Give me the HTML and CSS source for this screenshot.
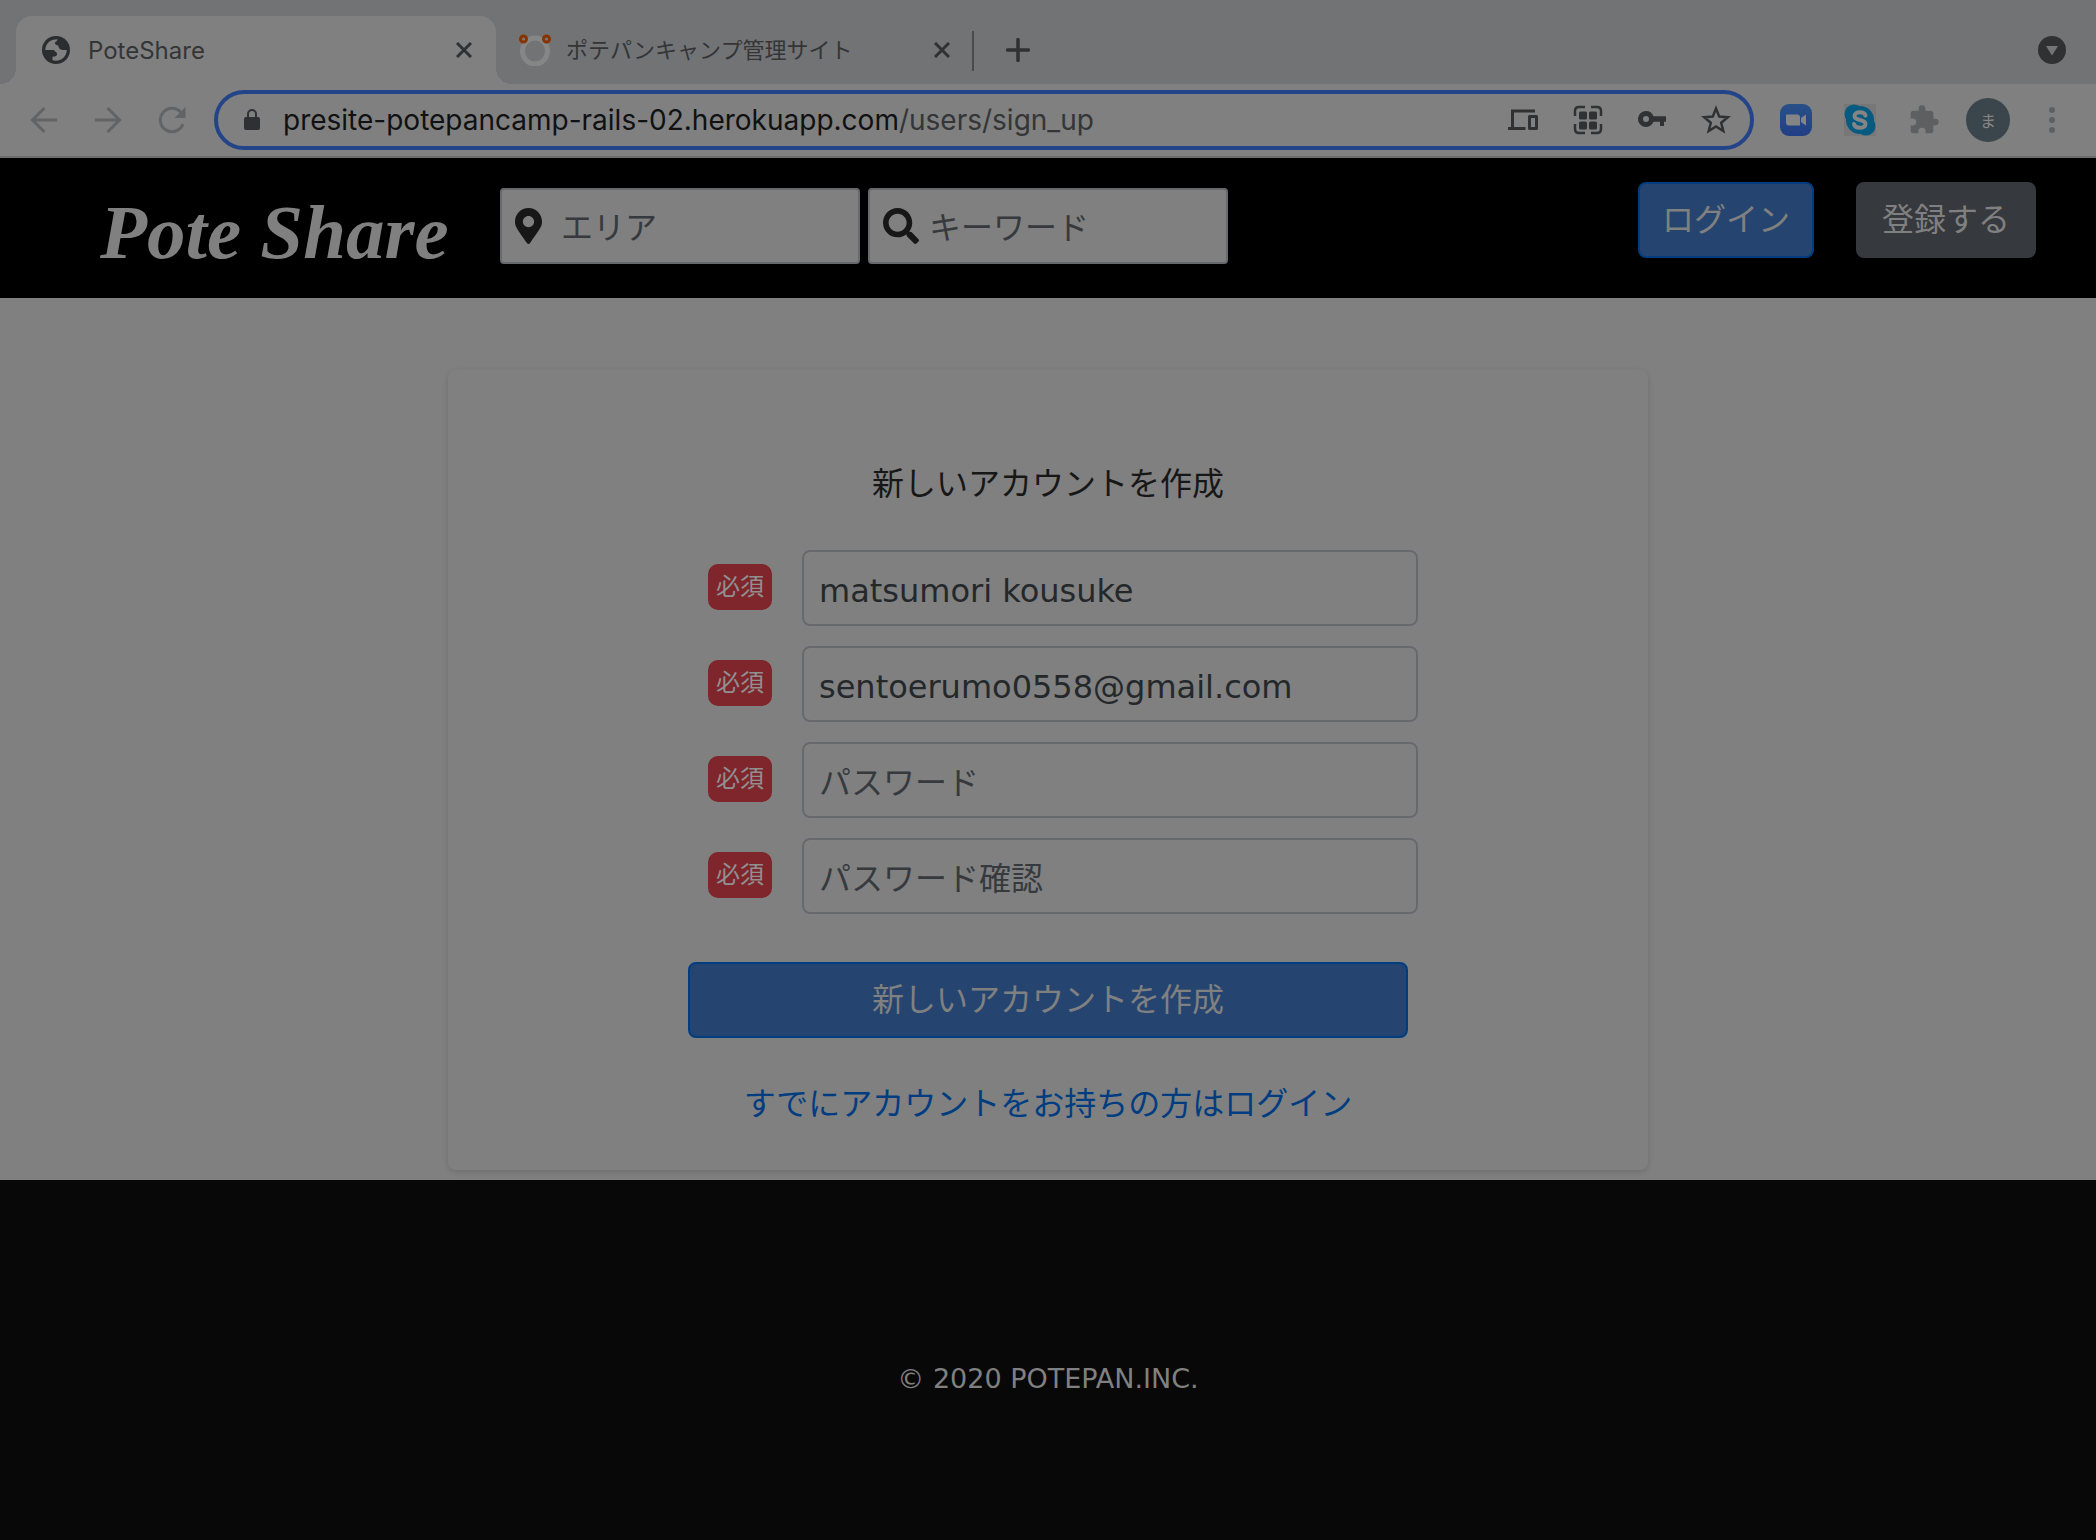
FILE: index.html
```html
<!DOCTYPE html>
<html lang="ja">
<head>
<meta charset="utf-8">
<title>PoteShare</title>
<link rel="stylesheet" href="styles.css">
</head>
<body>
<div class="browser">
  <div class="tabstrip">
    <div class="tab tab-active">
      <svg class="favicon" viewBox="0 0 28 28" width="28" height="28"><circle cx="14" cy="14" r="14" fill="#2b2d30"/><path d="M3.300 14C3.300 8 8 3.300 15.500 3.300C15.500 5.500 12.800 5.500 13 7.500C13.300 9.300 16.200 8.500 16.600 10.800C17 13.300 19 14 21 14H24.700C24.700 20 20 24.700 14 24.700L10.500 24.200V20.800C13.800 20.800 15.500 19.500 15 17.500C14.500 15.800 13 16 12 14Z" fill="#808080"/></svg>
      <span class="tab-title">PoteShare</span>
      <button class="icon-button" aria-label="タブを閉じる"><svg viewBox="0 0 16 16" width="16" height="16"><path d="M1 1L15 15M15 1L1 15" stroke="#2f3133" stroke-width="3"/></svg></button>
    </div>
    <div class="tab tab-idle">
      <svg class="favicon" viewBox="0 0 32 32" width="32" height="32"><ellipse cx="16" cy="17" rx="12.500" ry="13" fill="none" stroke="#858686" stroke-width="5"/><circle cx="4.500" cy="5" r="3" fill="#807a76" stroke="#853402" stroke-width="3"/><circle cx="27.500" cy="5" r="3" fill="#807a76" stroke="#853402" stroke-width="3"/></svg>
      <span class="tab-title tab-title-ja">ポテパンキャンプ管理サイト</span>
      <button class="icon-button" aria-label="タブを閉じる"><svg viewBox="0 0 16 16" width="16" height="16"><path d="M1 1L15 15M15 1L1 15" stroke="#2f3133" stroke-width="3"/></svg></button>
    </div>
    <span class="tab-divider"></span>
    <button class="icon-button new-tab" aria-label="新しいタブ"><svg viewBox="0 0 24 24" width="24" height="24"><path d="M12 1.500V22.500M1.500 12H22.500" stroke="#2f3133" stroke-width="3.500" stroke-linecap="round"/></svg></button>
    <button class="icon-button tab-search" aria-label="タブを検索"><svg viewBox="0 0 28 28" width="28" height="28"><circle cx="14" cy="14" r="14" fill="#303133"/><path d="M8 10H20L14 19.500Z" fill="#747577"/></svg></button>
  </div>
  <div class="toolbar">
    <div class="nav-buttons">
      <button class="icon-button" aria-label="戻る"><svg viewBox="0 0 28 28" width="28" height="28"><path d="M27 14H3M14.500 2L2.500 14L14.500 26" fill="none" stroke="#616365" stroke-width="3"/></svg></button>
      <button class="icon-button" aria-label="進む"><svg viewBox="0 0 28 28" width="28" height="28"><path d="M1 14H25M13.500 2L25.500 14L13.500 26" fill="none" stroke="#616365" stroke-width="3"/></svg></button>
      <button class="icon-button" aria-label="再読み込み"><svg viewBox="0 0 28 28" width="28" height="28"><path d="M25 18A11.700 11.700 0 1 1 23 6.500" fill="none" stroke="#616365" stroke-width="3"/><path d="M27.500 1V12H16.500Z" fill="#616365"/></svg></button>
    </div>
    <div class="omnibox">
      <svg class="lock" viewBox="0 0 16 22" width="16" height="22"><rect y="8" width="16" height="13" rx="2" fill="#2e3033"/><path d="M4 9V5a4 4 0 0 1 8 0V9" fill="none" stroke="#2e3033" stroke-width="2"/></svg>
      <div class="url"><span class="url-host">presite-potepancamp-rails-02.herokuapp.com</span>/users/sign_up</div>
      <div class="page-actions">
        <svg viewBox="0 0 32 32" width="32" height="32"><path d="M4.500 24V7H27M0 24.500H17.500" fill="none" stroke="#303133" stroke-width="3"/><path d="M21.500 12.500H28.500V24.500H21.500Z" fill="none" stroke="#303133" stroke-width="3" stroke-linejoin="round"/></svg>
        <svg viewBox="0 0 32 32" width="32" height="32"><path d="M3 12V7Q3 3 7 3H13M19 3H25Q29 3 29 7V12M29 20V25Q29 29 25 29H19M13 29H7Q3 29 3 25V20" fill="none" stroke="#303133" stroke-width="2.500"/><g fill="#303133"><rect x="7" y="7.500" width="8" height="8" rx="1.500"/><rect x="17" y="7.500" width="8" height="8" rx="1.500"/><rect x="7" y="17.500" width="8" height="8" rx="1.500"/><rect x="17" y="17.500" width="8" height="8" rx="1.500"/></g></svg>
        <svg viewBox="0 0 32 32" width="32" height="32"><path fill-rule="evenodd" d="M10 7a8 8 0 1 0 7.500 10.700H24V22H28V17.700H30V12.300H17.500A8 8 0 0 0 10 7ZM10 12a3 3 0 1 1 0 6a3 3 0 0 1 0-6Z" fill="#303133"/></svg>
        <svg viewBox="0 0 32 32" width="32" height="32"><path d="M16 4.500L19.200 12.500L27.800 13.200L21.200 18.700L23.300 27L16 22.500L8.700 27L10.800 18.700L4.200 13.200L12.800 12.500Z" fill="none" stroke="#303133" stroke-width="2.500"/></svg>
      </div>
    </div>
    <div class="extensions">
      <svg viewBox="0 0 32 32" width="32" height="32"><defs><linearGradient id="zoom-blue" x1="0" y1="0" x2="0" y2="1"><stop offset="0" stop-color="#285086"/><stop offset="1" stop-color="#213f86"/></linearGradient></defs><rect width="32" height="32" rx="9" fill="url(#zoom-blue)"/><path d="M6 10.500H17Q20 10.500 20 13.500V21.500H9Q6 21.500 6 18.500ZM21 14L26 10.500V21.500L21 18Z" fill="#858585"/></svg>
      <svg viewBox="0 0 32 32" width="32" height="32"><rect width="32" height="32" fill="#777"/><circle cx="10" cy="10" r="9.500" fill="#075a80"/><circle cx="22" cy="22" r="9.500" fill="#075a80"/><circle cx="16" cy="16" r="14" fill="#075a80"/><path d="M21.500 11.500C20.500 7 10.500 7 10.500 12C10.500 17.500 21.500 14.500 21.500 20C21.500 25 11 25 10 20" fill="none" stroke="#858585" stroke-width="4" stroke-linecap="round"/></svg>
      <svg viewBox="0 0 24 24" width="32" height="32"><path fill="#5d5f61" d="M20.500 11H19V7c0-1.100-.9-2-2-2h-4V3.500a2.500 2.500 0 0 0-5 0V5H4c-1.100 0-2 .9-2 2v3.800h1.500a2.700 2.700 0 0 1 0 5.400H2V20c0 1.100.9 2 2 2h3.800v-1.500a2.700 2.700 0 0 1 5.400 0V22H17c1.100 0 2-.9 2-2v-4h1.500a2.500 2.500 0 0 0 0-5z"/></svg>
      <button class="avatar">ま</button>
      <button class="icon-button" aria-label="メニュー"><svg viewBox="0 0 32 32" width="32" height="32"><g fill="#5d5f61"><circle cx="16" cy="6" r="3"/><circle cx="16" cy="16" r="3"/><circle cx="16" cy="26" r="3"/></g></svg></button>
    </div>
  </div>
</div>
<header class="site-header">
  <a class="logo" href="#">Pote Share</a>
  <form class="search">
    <label class="search-field"><svg viewBox="0 0 384 512" width="27" height="36"><path fill="#171717" d="M172.300 501.700C27 291 0 269.400 0 192 0 86 86 0 192 0s192 86 192 192c0 77.400-27 99-172.300 309.700-9.500 13.800-29.900 13.800-39.400 0zM192 272c44.200 0 80-35.800 80-80s-35.800-80-80-80-80 35.800-80 80 35.800 80 80 80z"/></svg><input class="area-input" type="text" placeholder="エリア" aria-label="エリア"></label>
    <label class="search-field"><svg viewBox="0 0 512 512" width="36" height="36"><path fill="#171717" d="M505 442.700L405.300 343c-4.500-4.500-10.600-7-17-7H372c27.600-35.300 44-79.700 44-128C416 93.100 322.900 0 208 0S0 93.100 0 208s93.100 208 208 208c48.300 0 92.700-16.400 128-44v16.300c0 6.400 2.500 12.500 7 17l99.700 99.700c9.400 9.400 24.600 9.400 33.900 0l28.300-28.300c9.400-9.400 9.400-24.600.1-34zM208 336c-70.700 0-128-57.200-128-128 0-70.700 57.200-128 128-128 70.700 0 128 57.200 128 128 0 70.700-57.200 128-128 128z"/></svg><input type="text" placeholder="キーワード" aria-label="キーワード"></label>
  </form>
  <nav class="account">
    <button class="btn btn-primary btn-login">ログイン</button>
    <button class="btn btn-secondary">登録する</button>
  </nav>
</header>
<main class="content">
  <section class="card">
    <h1 class="card-title">新しいアカウントを作成</h1>
    <form class="signup">
      <div class="field"><label class="badge" for="name">必須</label><input class="field-input" id="name" type="text" value="matsumori kousuke"></div>
      <div class="field"><label class="badge" for="email">必須</label><input class="field-input" id="email" type="email" value="sentoerumo0558@gmail.com"></div>
      <div class="field"><label class="badge" for="password">必須</label><input class="field-input" id="password" type="password" placeholder="パスワード"></div>
      <div class="field"><label class="badge" for="confirm">必須</label><input class="field-input" id="confirm" type="password" placeholder="パスワード確認"></div>
      <button class="btn btn-primary btn-submit">新しいアカウントを作成</button>
    </form>
    <a class="login-link" href="#">すでにアカウントをお持ちの方はログイン</a>
  </section>
</main>
<footer class="site-footer">© 2020 POTEPAN.INC.</footer>
</body>
</html>
```
FILE: styles.css
```css
* { box-sizing: border-box; }

body {
  margin: 0;
  min-height: 100vh;
  display: flex;
  flex-direction: column;
  background: #808080;
  font-family: "DejaVu Sans", "Noto Sans CJK JP", sans-serif;
  font-size: 32px;
}

button, input { font: inherit; }
svg { display: block; flex: none; }

.icon-button {
  display: grid;
  place-items: center;
  flex: none;
  padding: 0;
  border: 0;
  background: none;
}

/* Browser chrome */
.browser { font-family: Inter, "Noto Sans CJK JP", sans-serif; }

.tabstrip {
  height: 84px;
  padding: 16px 30px 0 16px;
  display: flex;
  background: #727375;
}

.tab {
  width: 480px;
  height: 68px;
  display: flex;
  align-items: center;
}

.tab-idle { padding: 0 26px 0 23px; }

.tab-active {
  position: relative;
  padding: 0 24px 0 26px;
  border-radius: 16px 16px 0 0;
  background: #808080;
}

.tab-active::before,
.tab-active::after {
  content: "";
  position: absolute;
  bottom: 0;
  width: 16px;
  height: 16px;
}

.tab-active::before {
  left: -16px;
  background: radial-gradient(circle at 0 0, transparent 16px, #808080 16px);
}

.tab-active::after {
  right: -16px;
  background: radial-gradient(circle at 100% 0, transparent 16px, #808080 16px);
}

.tab-title {
  flex: 1;
  margin-left: 18px;
  font-size: 24px;
  color: #333537;
  white-space: nowrap;
}

.tab-title-ja {
  margin-left: 15px;
  padding-bottom: 4px;
  font-size: 22px;
}

.tab-divider {
  width: 2px;
  height: 40px;
  margin: 15px 0 0 -4px;
  background: #4a4b4d;
}

.new-tab { margin-left: 32px; }
.tab-search { margin-left: auto; }

.toolbar {
  height: 74px;
  padding: 0 28px 0 30px;
  display: flex;
  align-items: center;
  border-bottom: 2px solid #6c6c6c;
}

.nav-buttons {
  display: flex;
  gap: 36px;
  margin-right: 28px;
}

.omnibox {
  flex: 1;
  height: 60px;
  padding: 0 18px 0 26px;
  display: flex;
  align-items: center;
  border: 4px solid #234488;
  border-radius: 30px;
}

.url {
  flex: 1;
  margin-left: 23px;
  font-size: 28px;
  color: #343537;
  white-space: nowrap;
}

.url-host { color: #101112; }

.page-actions, .extensions {
  display: flex;
  align-items: center;
  gap: 32px;
}

.extensions { margin-left: 26px; }
.extensions .icon-button { margin-left: -6px; }

.avatar {
  width: 44px;
  height: 44px;
  margin-left: -6px;
  padding: 0;
  border: 0;
  border-radius: 50%;
  background: #3a464c;
  color: #858585;
  font-size: 16px;
}

/* Site header */
.site-header {
  height: 140px;
  padding: 0 60px 0 100px;
  display: flex;
  align-items: flex-start;
  background: #000;
}

.logo {
  width: 400px;
  padding-top: 30px;
  font: italic bold 77px/88px "Liberation Serif", serif;
  color: #808080;
  text-decoration: none;
  white-space: nowrap;
}

.search {
  display: flex;
  gap: 8px;
  padding-top: 30px;
}

.search-field {
  width: 360px;
  height: 76px;
  padding: 0 14px 0 13px;
  display: flex;
  align-items: center;
  gap: 10px;
  border: 2px solid #676a6d;
  border-radius: 4px;
  background: #808080;
}

.search-field input {
  flex: 1;
  min-width: 0;
  padding: 4px 0 0;
  border: 0;
  background: none;
  color: #24282b;
}

.search-field .area-input { padding-left: 9px; }

input::placeholder {
  color: #363a3e;
  opacity: 1;
}

.account {
  display: flex;
  gap: 42px;
  margin-left: auto;
  padding-top: 24px;
}

.btn {
  height: 76px;
  padding: 0 24px;
  border: 2px solid;
  border-radius: 8px;
  line-height: 48px;
  color: #808080;
}

.btn-primary {
  background: #254570;
  border-color: #003d80;
}

.btn-secondary {
  background: #36393d;
  border-color: #36393d;
}

.btn-login { padding: 0 22px; }

/* Sign-up card */
.content { padding: 72px 24px 10px; }

.card {
  max-width: 1200px;
  margin: 0 auto;
  padding: 90px 0 42px;
  display: flex;
  flex-direction: column;
  align-items: center;
  border-radius: 8px;
  box-shadow: 0 2px 6px rgba(0, 0, 0, .15);
}

.card-title {
  margin: 0 0 42px;
  font-size: 32px;
  font-weight: 400;
  line-height: 48px;
  color: #171717;
}

.signup {
  width: 720px;
  display: flex;
  flex-direction: column;
  gap: 20px;
}

.field {
  height: 76px;
  margin: 0 -10px 0 20px;
  display: flex;
  align-items: center;
  gap: 30px;
}

.badge {
  width: 64px;
  height: 46px;
  margin-bottom: 2px;
  border-radius: 10px;
  background: #7f262c;
  color: #909090;
  font-size: 24px;
  line-height: 46px;
  text-align: center;
}

.field-input {
  flex: 1;
  height: 76px;
  padding: 5px 15px 0;
  border: 2px solid #676a6d;
  border-radius: 8px;
  background: #808080;
  color: #24282b;
}

.btn-submit { margin-top: 28px; }

.login-link {
  margin-top: 42px;
  line-height: 48px;
  color: #003d80;
  text-decoration: none;
}

.site-footer {
  flex: 1;
  padding-top: 178px;
  background: #080808;
  color: #808080;
  font-size: 27px;
  line-height: 42px;
  text-align: center;
}
```
